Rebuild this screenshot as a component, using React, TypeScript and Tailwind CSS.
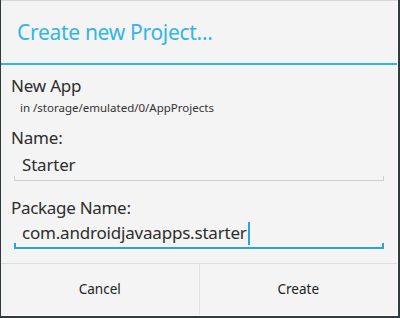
export default function App() {
  return (
    <div
      className="w-[400px] h-[318px] bg-[#2f3b3d] pl-px pr-[2px] pb-[2px]"
      style={{ fontFamily: '"Noto Sans", "Open Sans", sans-serif' }}
    >
      <div className="h-full flex flex-col bg-[#f4f4f4] border-t border-[#d8d8d8] border-r border-b border-r-white border-b-white">
        {/* Title */}
        <div className="h-[62px] flex items-center pl-4">
          <h1 className="text-[21px] text-[#33b5e5] tracking-[-0.3px] leading-none">
            Create new Project...
          </h1>
        </div>
        <div className="h-[2px] bg-[#33b5e5]" />

        {/* Body */}
        <div className="flex-1 flex flex-col px-[10px] pt-[10px] text-[#2d2d2d]">
          <p className="text-[17px] leading-[22px] tracking-[-0.2px]">New App</p>
          <p className="text-[11.5px] leading-[18px] pl-[9px] mt-[2px] text-[#333]">
            in /storage/emulated/0/AppProjects
          </p>
          <p className="text-[17px] leading-[22px] mt-[10px] tracking-[-0.2px]">Name:</p>
          <TextField value="Starter" />
          <p className="text-[17px] leading-[22px] mt-[16px] tracking-[-0.3px]">Package Name:</p>
          <TextField value="com.androidjavaapps.starter" focused />
        </div>

        {/* Buttons */}
        <div className="h-[52px] flex border-t border-[#dedede] text-[13.5px] text-[#222]">
          <button className="flex-1 flex items-center justify-center border-r border-[#e2e2e2] pb-px">
            Cancel
          </button>
          <button className="flex-1 flex items-center justify-center pb-px">Create</button>
        </div>
      </div>
    </div>
  )
}

function TextField({ value, focused }: { value: string; focused?: boolean }) {
  return (
    <div
      className={
        focused
          ? 'relative mx-[3px] h-[30px] flex items-end pb-[2px] pl-2 border-b-2 border-[#2ba3d8]'
          : 'relative mx-[3px] h-[32px] flex items-end pb-[3px] pl-2 border-b border-[#cfcfcf]'
      }
    >
      {/* end ticks of the underline */}
      <span
        className={
          focused
            ? 'absolute left-0 bottom-0 w-[2px] h-[4px] bg-[#2ba3d8]'
            : 'absolute left-0 bottom-0 w-px h-[4px] bg-[#cfcfcf]'
        }
      />
      <span
        className={
          focused
            ? 'absolute right-0 bottom-0 w-[2px] h-[4px] bg-[#2ba3d8]'
            : 'absolute right-0 bottom-0 w-px h-[4px] bg-[#cfcfcf]'
        }
      />
      <span className="text-[17px] leading-[24px] tracking-[-0.2px] flex items-center">
        {value}
        {focused && <span className="inline-block w-[2px] h-[23px] bg-[#2ba3d8] ml-px" />}
      </span>
    </div>
  )
}
